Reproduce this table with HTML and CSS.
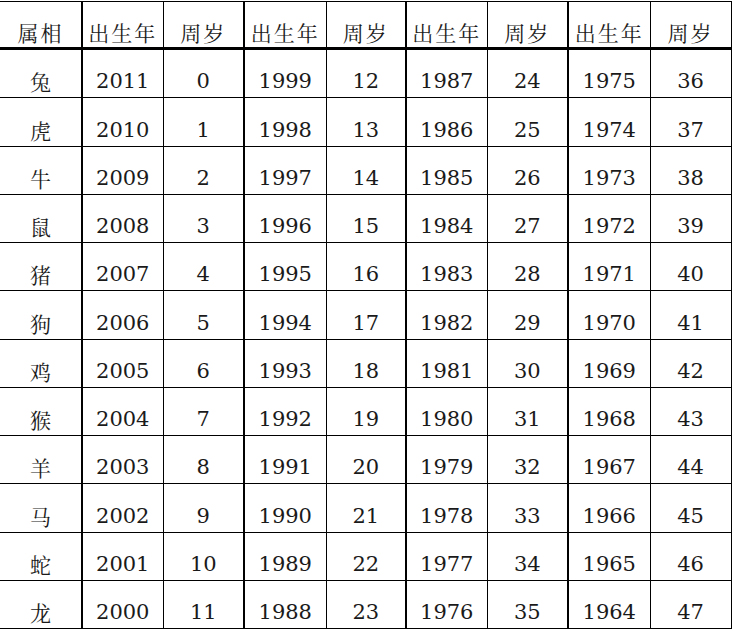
FILE: index.html
```html
<!DOCTYPE html>
<html lang="zh-CN">
<head>
<meta charset="utf-8">
<title>属相 出生年 周岁</title>
<link rel="stylesheet" href="styles.css">
</head>
<body>
<table class="age-table">
  <colgroup>
    <col class="c1"><col class="c2"><col class="c3"><col class="c4"><col class="c5"><col class="c6"><col class="c7"><col class="c8"><col class="c9">
  </colgroup>
  <thead>
    <tr>
      <th class="zh sep">属相</th>
      <th class="zh">出生年</th><th class="zh sep">周岁</th>
      <th class="zh">出生年</th><th class="zh sep">周岁</th>
      <th class="zh">出生年</th><th class="zh sep">周岁</th>
      <th class="zh">出生年</th><th class="zh">周岁</th>
    </tr>
  </thead>
  <tbody>
    <tr><td class="zh sep">兔</td><td>2011</td><td class="sep">0</td><td>1999</td><td class="sep">12</td><td>1987</td><td class="sep">24</td><td>1975</td><td>36</td></tr>
    <tr><td class="zh sep">虎</td><td>2010</td><td class="sep">1</td><td>1998</td><td class="sep">13</td><td>1986</td><td class="sep">25</td><td>1974</td><td>37</td></tr>
    <tr><td class="zh sep">牛</td><td>2009</td><td class="sep">2</td><td>1997</td><td class="sep">14</td><td>1985</td><td class="sep">26</td><td>1973</td><td>38</td></tr>
    <tr><td class="zh sep">鼠</td><td>2008</td><td class="sep">3</td><td>1996</td><td class="sep">15</td><td>1984</td><td class="sep">27</td><td>1972</td><td>39</td></tr>
    <tr><td class="zh sep">猪</td><td>2007</td><td class="sep">4</td><td>1995</td><td class="sep">16</td><td>1983</td><td class="sep">28</td><td>1971</td><td>40</td></tr>
    <tr><td class="zh sep">狗</td><td>2006</td><td class="sep">5</td><td>1994</td><td class="sep">17</td><td>1982</td><td class="sep">29</td><td>1970</td><td>41</td></tr>
    <tr><td class="zh sep">鸡</td><td>2005</td><td class="sep">6</td><td>1993</td><td class="sep">18</td><td>1981</td><td class="sep">30</td><td>1969</td><td>42</td></tr>
    <tr><td class="zh sep">猴</td><td>2004</td><td class="sep">7</td><td>1992</td><td class="sep">19</td><td>1980</td><td class="sep">31</td><td>1968</td><td>43</td></tr>
    <tr><td class="zh sep">羊</td><td>2003</td><td class="sep">8</td><td>1991</td><td class="sep">20</td><td>1979</td><td class="sep">32</td><td>1967</td><td>44</td></tr>
    <tr><td class="zh sep">马</td><td>2002</td><td class="sep">9</td><td>1990</td><td class="sep">21</td><td>1978</td><td class="sep">33</td><td>1966</td><td>45</td></tr>
    <tr><td class="zh sep">蛇</td><td>2001</td><td class="sep">10</td><td>1989</td><td class="sep">22</td><td>1977</td><td class="sep">34</td><td>1965</td><td>46</td></tr>
    <tr><td class="zh sep">龙</td><td>2000</td><td class="sep">11</td><td>1988</td><td class="sep">23</td><td>1976</td><td class="sep">35</td><td>1964</td><td>47</td></tr>
  </tbody>
</table>
</body>
</html>
```
FILE: styles.css
```css
html, body {
  margin: 0;
  padding: 0;
  background: #fff;
}

.age-table {
  margin-top: 1px;
  border-collapse: collapse;
  table-layout: fixed;
  width: 731px;
  color: #1a1a1a;
  font-family: "DejaVu Serif", "Noto Serif CJK SC", "Noto Sans CJK SC", serif;
  font-size: 21px;
  border-top: 1px solid #000;
  border-right: 1px solid #000;
  border-bottom: 3px solid #000;
}

.c1 { width: 82px; }
.c2 { width: 81px; }
.c3 { width: 81px; }
.c4 { width: 82px; }
.c5 { width: 80px; }
.c6 { width: 81px; }
.c7 { width: 81px; }
.c8 { width: 82px; }
.c9 { width: 81px; }

.age-table th,
.age-table td {
  padding: 0 0 4px 0;
  text-align: center;
  vertical-align: bottom;
  font-weight: normal;
  line-height: 24px;
  border-left: 1px solid #000;
  border-bottom: 1px solid #000;
}

.age-table th:first-child,
.age-table td:first-child {
  border-left: none;
}

.age-table th {
  height: 42px;
  padding-bottom: 3px;
  border-bottom: 3px solid #000;
}

.age-table td {
  height: 43.25px;
}

.age-table .sep {
  border-right: 2px solid #000;
}

.zh {
  font-family: "Noto Serif CJK SC", "Noto Sans CJK SC", serif;
  font-weight: 300;
  letter-spacing: 2px;
}

.age-table td.zh {
  letter-spacing: 0;
}
```
